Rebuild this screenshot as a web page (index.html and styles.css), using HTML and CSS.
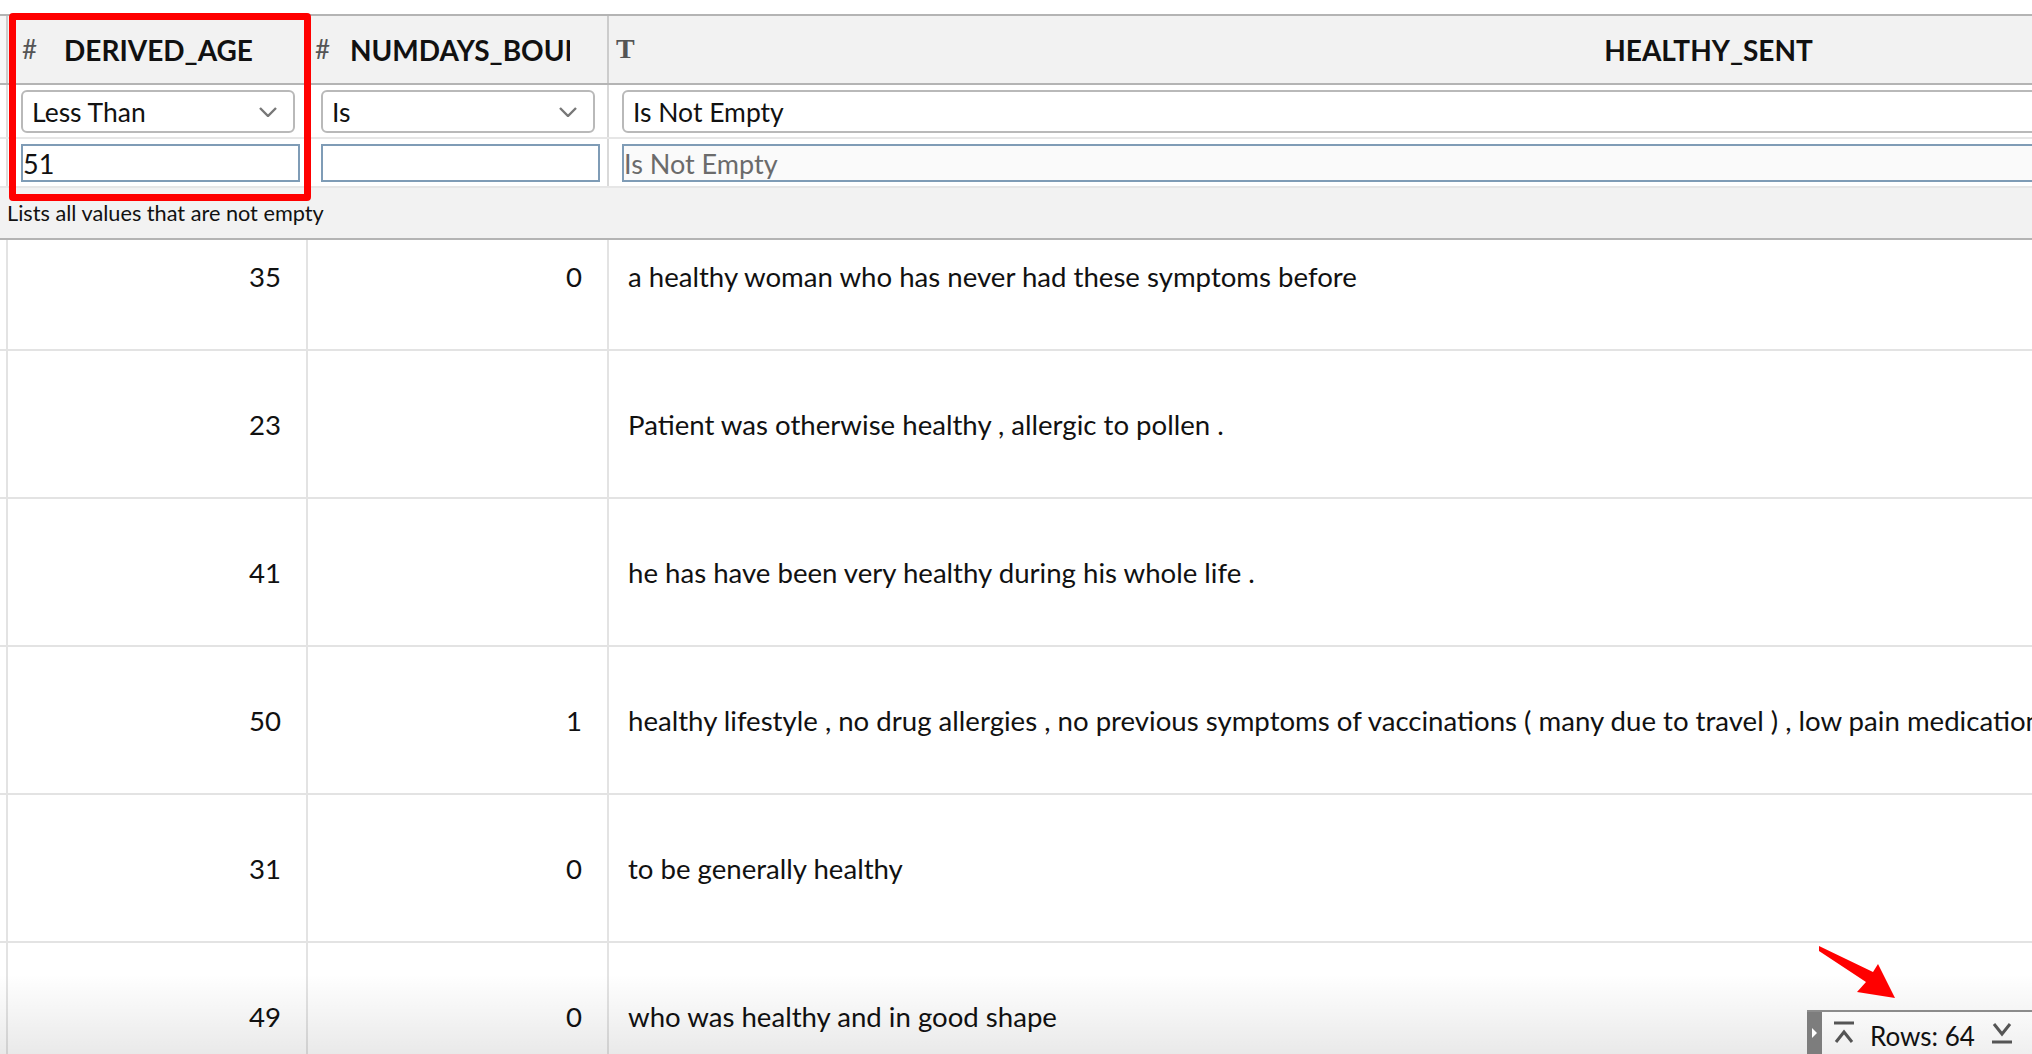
FILE: index.html
```html
<!DOCTYPE html>
<html>
<head>
    <title>Filtered table</title>
    <link rel="stylesheet" href="styles.css">
</head>
<body>
<div class="sheet">
    <div class="head">
        <div class="stub"></div>
        <div class="hcell c1 first"><span class="hicon">#</span><span class="hlabel">DERIVED_AGE</span></div>
        <div class="hcell c2"><span class="hicon">#</span><span class="hlabel">NUMDAYS_BOUNDED</span></div>
        <div class="hcell c3"><span class="hicon serif">T</span><span class="hlabel">HEALTHY_SENT</span></div>
    </div>

    <div class="frow ops">
        <div class="stub"></div>
        <div class="fcell c1">
            <div class="select"><span>Less Than</span>
                <svg width="18" height="10" viewBox="0 0 18 10"><polyline points="1,1 9,9 17,1" fill="none" stroke="#777" stroke-width="2.4"/></svg>
            </div>
        </div>
        <div class="fcell c2">
            <div class="select"><span>Is</span>
                <svg width="18" height="10" viewBox="0 0 18 10"><polyline points="1,1 9,9 17,1" fill="none" stroke="#777" stroke-width="2.4"/></svg>
            </div>
        </div>
        <div class="fcell c3">
            <div class="select"><span>Is Not Empty</span></div>
        </div>
    </div>

    <div class="frow vals">
        <div class="stub"></div>
        <div class="fcell c1"><input type="text" value="51"></div>
        <div class="fcell c2"><input type="text" value=""></div>
        <div class="fcell c3"><input type="text" placeholder="Is Not Empty"></div>
    </div>

    <div class="hint">Lists all values that are not empty</div>

    <div class="rows">
        <div class="row">
            <div class="stub"></div>
            <div class="cell num c1">35</div>
            <div class="cell num c2">0</div>
            <div class="cell txt c3">a healthy woman who has never had these symptoms before</div>
        </div>
        <div class="row">
            <div class="stub"></div>
            <div class="cell num c1">23</div>
            <div class="cell num c2"></div>
            <div class="cell txt c3">Patient was otherwise healthy , allergic to pollen .</div>
        </div>
        <div class="row">
            <div class="stub"></div>
            <div class="cell num c1">41</div>
            <div class="cell num c2"></div>
            <div class="cell txt c3">he has have been very healthy during his whole life .</div>
        </div>
        <div class="row">
            <div class="stub"></div>
            <div class="cell num c1">50</div>
            <div class="cell num c2">1</div>
            <div class="cell txt c3">healthy lifestyle , no drug allergies , no previous symptoms of vaccinations ( many due to travel ) , low pain medication use .</div>
        </div>
        <div class="row">
            <div class="stub"></div>
            <div class="cell num c1">31</div>
            <div class="cell num c2">0</div>
            <div class="cell txt c3">to be generally healthy</div>
        </div>
        <div class="row">
            <div class="stub"></div>
            <div class="cell num c1">49</div>
            <div class="cell num c2">0</div>
            <div class="cell txt c3">who was healthy and in good shape</div>
        </div>
    </div>

    <div class="fade"></div>

    <div class="highlight"></div>

    <svg class="arrow" width="90" height="62" viewBox="0 0 90 62">
        <polygon points="9,6 63,32 68,24 85,58 47,52 56,42 9,11" fill="#ff0000"/>
    </svg>

    <div class="rowsbar">
        <div class="grip"><span class="tri"></span></div>
        <svg class="up" width="22" height="24" viewBox="0 0 22 24">
            <line x1="1" y1="2" x2="21" y2="2" stroke="#555" stroke-width="3"/>
            <polyline points="3,21 11,11 19,21" fill="none" stroke="#555" stroke-width="3"/>
        </svg>
        <span class="count">Rows: 64</span>
        <svg class="down" width="22" height="24" viewBox="0 0 22 24">
            <polyline points="3,3 11,13 19,3" fill="none" stroke="#555" stroke-width="3"/>
            <line x1="1" y1="21" x2="21" y2="21" stroke="#555" stroke-width="3"/>
        </svg>
    </div>
</div>
</body>
</html>
```

FILE: styles.css
```css
body {
    margin: 0;
    font-family: Lato, "Liberation Sans", sans-serif;
    color: #111;
    background: #fff;
    overflow: hidden;
}
.sheet {
    position: relative;
    width: 2032px;
    height: 1054px;
    padding-top: 14px;
    box-sizing: border-box;
    overflow: hidden;
    display: flex;
    flex-direction: column;
}
.stub {
    width: 8px;
    flex: none;
    box-sizing: border-box;
    border-right: 2px solid #e3e3e3;
}
.c1, .c2, .c3 {
    flex: none;
    box-sizing: border-box;
}
.c1 { width: 300px; }
.c2 { width: 301px; }
.c3 { width: 2196px; }

/* header */
.head {
    display: flex;
    flex: none;
    height: 71px;
    box-sizing: border-box;
    border-top: 2px solid #b4b4b4;
    border-bottom: 2px solid #b4b4b4;
    background: #f2f2f2;
}
.head .stub {
    background: #f6f6f6;
    border-right-color: #cccccc;
}
.hcell {
    display: flex;
    align-items: center;
    padding: 0 37px 0 7px;
    border-right: 2px solid #cccccc;
}
.hcell.first {
    padding-left: 14px;
    padding-right: 46px;
}
.hicon {
    width: 35px;
    flex: none;
    font-size: 26px;
    color: #555;
    position: relative;
    top: -1px;
}
.hicon.serif {
    font-family: "Liberation Serif", serif;
    font-weight: bold;
    font-size: 28px;
}
.hlabel {
    flex: 1;
    min-width: 0;
    overflow: hidden;
    white-space: nowrap;
    text-align: center;
    font-weight: 700;
    font-size: 28px;
}

/* filter rows */
.frow {
    display: flex;
    flex: none;
    background: #fff;
    box-sizing: border-box;
    border-bottom: 2px solid #e6e6e6;
}
.frow .stub {
    border-right-color: #dddddd;
}
.ops { height: 54px; }
.vals { height: 49px; }
.fcell {
    padding: 5px 0 0 13px;
    border-right: 2px solid #d9d9d9;
    overflow: hidden;
}
.select {
    width: 274px;
    height: 43px;
    box-sizing: border-box;
    border: 2px solid #b9b9b9;
    border-radius: 6px;
    background: #fff;
    display: flex;
    align-items: center;
    justify-content: space-between;
    padding: 0 16px 0 9px;
    font-size: 26.5px;
}
.c3 .select { width: 1600px; }
input[type="text"] {
    width: 279px;
    height: 38px;
    box-sizing: border-box;
    border: 2px solid #7f9cb6;
    padding: 0;
    margin: 0;
    font-family: Lato, "Liberation Sans", sans-serif;
    font-size: 27px;
    color: #111;
    background: #fff;
    outline: none;
}
.c3 input[type="text"] {
    width: 1600px;
    background: #fafafa;
}
input::placeholder {
    color: #6b6b6b;
}

.hint {
    height: 52px;
    flex: none;
    box-sizing: border-box;
    background: #f2f2f2;
    border-bottom: 2px solid #b4b4b4;
    padding-left: 7px;
    display: flex;
    align-items: center;
    font-size: 21.7px;
}

/* body rows */
.rows {
    flex: 1;
    overflow: hidden;
}
.row {
    display: flex;
    height: 148px;
    box-sizing: border-box;
    border-bottom: 2px solid #e3e3e3;
}
.row:first-child {
    margin-top: -37px;
}
.cell {
    display: flex;
    align-items: center;
    font-size: 27.6px;
    border-right: 2px solid #e3e3e3;
    white-space: nowrap;
    overflow: hidden;
}
.cell.num {
    justify-content: flex-end;
    padding-right: 25px;
}
.cell.txt {
    padding-left: 19px;
}

.fade {
    position: absolute;
    left: 0;
    right: 0;
    bottom: 0;
    height: 80px;
    background: linear-gradient(rgba(0, 0, 0, 0), rgba(0, 0, 0, 0.085));
    pointer-events: none;
}

/* annotations */
.highlight {
    position: absolute;
    left: 9px;
    top: 13px;
    width: 302px;
    height: 188px;
    box-sizing: border-box;
    border: 7px solid #ff0000;
    border-radius: 4px;
}
.arrow {
    position: absolute;
    left: 1810px;
    top: 940px;
}

.rowsbar {
    position: absolute;
    left: 1807px;
    top: 1010px;
    right: 0;
    bottom: 0;
    border-top: 2px solid #8c8c8c;
    background: linear-gradient(#fafafa, #efefef);
    display: flex;
    align-items: center;
}
.grip {
    width: 15px;
    align-self: stretch;
    background: #7d7d7d;
    display: flex;
    align-items: center;
    justify-content: center;
}
.tri {
    width: 0;
    height: 0;
    border-top: 5px solid transparent;
    border-bottom: 5px solid transparent;
    border-left: 5px solid #fff;
}
.up {
    margin-left: 11px;
}
.count {
    margin-left: 15px;
    font-size: 26px;
    color: #111;
    position: relative;
    top: 3px;
}
.down {
    margin-left: 16px;
}
```
